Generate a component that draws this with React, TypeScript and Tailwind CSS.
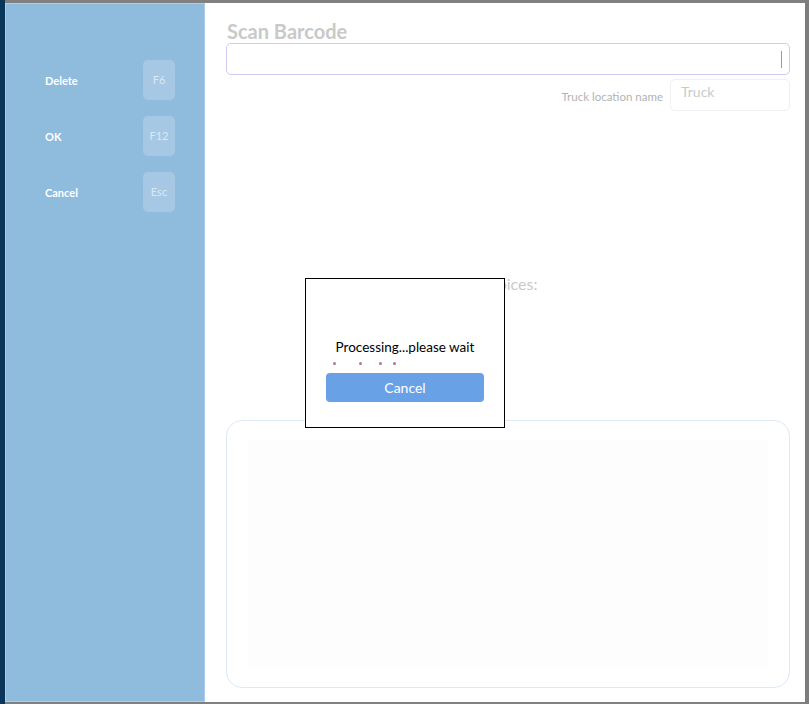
import React from "react";

const font = { fontFamily: "Lato, 'Liberation Sans', sans-serif" };

function KeyRow({ label, k }: { label: string; k: string }) {
  return (
    <div className="flex items-center justify-between h-[40px]">
      <span className="text-[11px] font-bold text-white mt-[3px]">{label}</span>
      <span className="w-[32px] h-[40px] rounded-[5px] bg-[#a6c8e4] flex items-center justify-center text-[11px] text-[#dbe8f3]">
        {k}
      </span>
    </div>
  );
}

export default function App() {
  return (
    <div className="relative w-[809px] h-[704px] bg-[#808080] overflow-hidden flex" style={font}>
      <div className="w-[5px] h-full bg-[#0b365a] shrink-0" />
      <div className="mt-[3px] w-[800px] h-[699px] flex bg-white shrink-0">
        <aside className="w-[200px] h-full bg-[#8fbbdd] border border-[#a9cdee] pt-[56px] pl-[39px] pr-[29px] flex flex-col gap-[16px]">
          <KeyRow label="Delete" k="F6" />
          <KeyRow label="OK" k="F12" />
          <KeyRow label="Cancel" k="Esc" />
        </aside>
        <main className="flex-1 pl-[21px] pr-[15px] pt-[16px] flex flex-col">
          <h1 className="text-[20px] leading-[24px] font-bold text-[#c9c9c9] pl-[1px]">Scan Barcode</h1>
          <div className="h-[32px] rounded-[5px] border border-[#d2c9f1] flex items-center justify-end pr-[7px]">
            <div className="w-px h-[17px] bg-[#9a9a9a]" />
          </div>
          <div className="mt-[4px] flex items-center justify-end gap-[7px]">
            <span className="text-[11.5px] text-[#b3b3b3] mt-[4px]">Truck location name</span>
            <div className="w-[120px] h-[32px] rounded-[5px] border border-[#f0f0f0] pl-[10px] pt-[1px] text-[14px] text-[#c9c9c9]">
              Truck
            </div>
          </div>
          <div className="mt-[161px] h-[24px] text-center text-[16px] text-[#c9c9c9] pr-[2px]">Invoices:</div>
          <div className="mt-[124px] h-[268px] rounded-[16px] border border-[#dde9f8] px-[21px] py-[19px]">
            <div className="w-full h-full bg-[#fdfdfd]" />
          </div>
        </main>
      </div>
      <div className="absolute left-[805px] top-[0px] w-[4px] h-[704px] bg-[#7d7d7d]" />
      <div className="absolute left-[305px] top-[278px] w-[200px] h-[150px] border border-black bg-white flex flex-col items-center pt-[59px]">
        <div className="text-[13.5px] leading-[19px] text-black">Processing...please wait</div>
        <div className="relative w-[158px] h-[14px]">
          <span className="absolute left-[7px] top-[5px] w-[3px] h-[3px] rounded-full bg-[#b8748a]" />
          <span className="absolute left-[33px] top-[5px] w-[3px] h-[3px] rounded-full bg-[#b8748a]" />
          <span className="absolute left-[53px] top-[5px] w-[3px] h-[3px] rounded-full bg-[#b8748a]" />
          <span className="absolute left-[67px] top-[5px] w-[3px] h-[3px] rounded-full bg-[#b8748a]" />
        </div>
        <button className="mt-[2px] w-[158px] h-[29px] rounded-[4px] bg-[#69a1e6] text-white text-[14px]">Cancel</button>
      </div>
    </div>
  );
}
